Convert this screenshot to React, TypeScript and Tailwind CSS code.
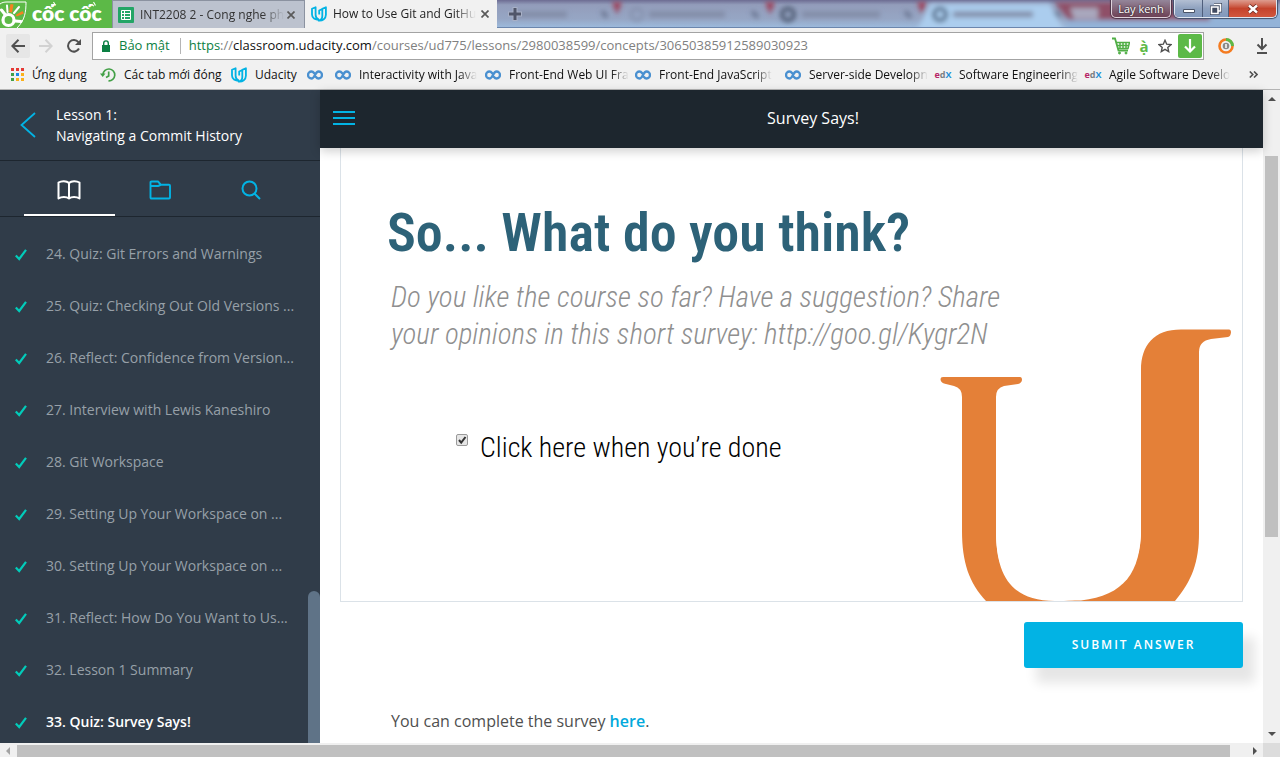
import React from "react";
import type { ReactNode } from "react";

const lessons = [
  "24. Quiz: Git Errors and Warnings",
  "25. Quiz: Checking Out Old Versions ...",
  "26. Reflect: Confidence from Version...",
  "27. Interview with Lewis Kaneshiro",
  "28. Git Workspace",
  "29. Setting Up Your Workspace on ...",
  "30. Setting Up Your Workspace on ...",
  "31. Reflect: How Do You Want to Us...",
  "32. Lesson 1 Summary",
  "33. Quiz: Survey Says!",
];

const UdacityMark = () => (
  <svg viewBox="0 0 16 16" className="size-4 shrink-0" fill="none" stroke="#02b3e4" strokeWidth="1.800" strokeLinejoin="round">
    <path d="M4.600 1.200v7.600c0 2.600 1 3.900 3 4.500C4.200 14.200 1 12 1 8.600V2.800z" />
    <path d="M14.900 1.200v7.600c0 3.800-3.200 6.200-7.300 5.800 2.400-.6 3.700-2.200 3.700-4.700V2.900zM11.300 3 8.200 4.500v3.900" />
  </svg>
);

const CourseraMark = () => (
  <svg viewBox="0 0 16 10" className="h-[10px] w-4 shrink-0" fill="none" stroke="#4a90d0" strokeWidth="2.300" strokeLinecap="round">
    <path d="M7 3C6.300 2 5.400 1.500 4.500 1.500a3.500 3.500 0 0 0 0 7C8 8.500 8 1.500 11.500 1.500a3.500 3.500 0 0 1 0 7C10.500 8.500 9.700 8 9 7" />
  </svg>
);

const EdxMark = () => (
  <span className="flex w-4 shrink-0 items-center justify-center font-['Open_Sans',sans-serif] text-[9px] leading-4 font-bold text-[#7b7f83]" aria-hidden="true">
    <span><span className="text-[#b72667]">e</span>d<span className="text-[#1e8fd5]">X</span></span>
  </span>
);

const AppsMark = () => (
  <svg viewBox="0 0 13 13" className="size-[13px] shrink-0">
    <path fill="#e53935" d="M0 0h3v3H0zM5 0h3v3H5zM10 0h3v3h-3z" />
    <path fill="#43a047" d="M0 5h3v3H0zM0 10h3v3H0z" />
    <path fill="#1e88e5" d="M5 5h3v3H5z" />
    <path fill="#fbb11a" d="M10 5h3v3h-3zM5 10h3v3H5zM10 10h3v3h-3z" />
  </svg>
);

const HistoryMark = () => (
  <svg viewBox="0 0 16 16" className="size-4 shrink-0" fill="none" stroke="#43a047" strokeWidth="1.700">
    <path d="M3 7.500a5.900 5.900 0 1 1 5.500 6.300" />
    <path d="M8.700 4.500V9L6 10.500" />
    <path d="M0 6.500h5.500L2.700 10z" fill="#43a047" stroke="none" />
  </svg>
);

const bookmarks: { mark: ReactNode; text: string; box: string; fade: boolean }[] = [
  { mark: <AppsMark />, text: "Ứng dụng", box: "w-[89px]", fade: false },
  { mark: <HistoryMark />, text: "Các tab mới đóng", box: "w-[131px]", fade: false },
  { mark: <UdacityMark />, text: "Udacity", box: "w-[76px]", fade: false },
  { mark: <CourseraMark />, text: "", box: "w-7", fade: false },
  { mark: <CourseraMark />, text: "Interactivity with Java", box: "w-[150px]", fade: true },
  { mark: <CourseraMark />, text: "Front-End Web UI Fra", box: "w-[150px]", fade: true },
  { mark: <CourseraMark />, text: "Front-End JavaScript", box: "w-[150px]", fade: true },
  { mark: <CourseraMark />, text: "Server-side Developn", box: "w-[150px]", fade: true },
  { mark: <EdxMark />, text: "Software Engineering", box: "w-[150px]", fade: true },
  { mark: <EdxMark />, text: "Agile Software Develo", box: "w-[150px]", fade: true },
];

const TabClose = () => (
  <svg viewBox="0 0 8 8" className="size-2" stroke="#5a5a5a" strokeWidth="1.700">
    <path d="M.5.5l7 7M7.500.5l-7 7" />
  </svg>
);

function TabStrip() {
  return (
    <div className="relative flex h-7 overflow-hidden bg-[#8fa3c4]">
      <div className="flex w-28 shrink-0 items-center bg-[#5cb947]">
        <svg viewBox="0 0 112 28" className="h-7 w-28" aria-hidden="true">
          <path d="M0 4C2 2.500 4 2 7 2h19c0 10-1 18-9 26" fill="none" stroke="#fff" strokeWidth="1" />
          <circle cx="8.500" cy="20" r="5.500" fill="none" stroke="#fff" strokeWidth="3.200" />
          <path d="M1.500 10 5.500 15M15 21l6 .5" stroke="#fff" strokeWidth="3" strokeLinecap="round" />
          <path d="M9 12 10.500 4l3 .5-1.500 8z" fill="#f58220" />
          <path d="M15.500 15 22.500 11l1.300 2.600-7 2.900z" fill="#f58220" />
          <path d="M7.500 12 7 5.500M14 13l5-6" stroke="#fff" strokeWidth="2" strokeLinecap="round" />
          <path d="m51 4.500 3 1.500M53.500 2l2 3.500M91 4.500l3 1.500M93.500 2l2 3.500" stroke="#fff" strokeWidth="1.100" />
          <text x="32" y="21" fill="#fff" fontFamily="Lato, sans-serif" fontWeight="800" fontSize="21">cốc cốc</text>
        </svg>
      </div>
      <div className="flex w-[193px] shrink-0 items-center border-x border-t border-[#8b92a0] bg-[#bcc2ce] pr-[9px] pl-[5px]">
        <svg viewBox="0 0 16 16" className="size-4 shrink-0">
          <rect width="16" height="16" rx="1" fill="#23a566" />
          <path d="M3.500 3.500h9v9h-9zM3.500 6.500h9M3.500 9.500h9M6.500 3.500v9" fill="none" stroke="#fff" />
        </svg>
        <span className="ml-[6px] mask-r-from-85% text-xs whitespace-nowrap text-[#333]">INT2208 2 - Cong nghe ph</span>
        <button aria-label="Close tab" className="ml-auto"><TabClose /></button>
      </div>
      <div className="flex w-[192px] shrink-0 items-center bg-[#f1f1f1] pr-[8px] pl-[6px]">
        <UdacityMark />
        <span className="ml-[6px] mask-r-from-85% text-xs whitespace-nowrap text-[#222]">How to Use Git and GitHu</span>
        <button aria-label="Close tab" className="ml-auto"><TabClose /></button>
      </div>
      <div className="relative flex min-w-0 flex-1 justify-end border-b border-[#6b86ad]">
        <svg viewBox="0 0 783 28" preserveAspectRatio="none" className="absolute inset-0 size-full" aria-hidden="true">
          <defs>
            <linearGradient id="glass" x1="0" y1="0" x2="0" y2="1">
              <stop offset="0" stopColor="#6d6c92" />
              <stop offset=".18" stopColor="#939dbb" />
              <stop offset=".7" stopColor="#96a6c4" />
              <stop offset="1" stopColor="#9cb9db" />
            </linearGradient>
            <filter id="soft" x="-5%" y="-50%" width="110%" height="200%"><feGaussianBlur stdDeviation="2.500" /></filter>
          </defs>
          <rect width="783" height="28" fill="url(#glass)" />
          <g filter="url(#soft)">
            <path d="M420 32 433 4h120l14 28z" fill="#abcdee" />
            <path d="M570 34h218V8H570z" fill="#93b3d8" />
            <path d="M557 2h66l90 0v19H572z" fill="#8f5068" />
            <path d="M573 8h28v12h-24z" fill="#a9a7bd" />
            <path d="m115 2 10 0-5 13zM268 2h10l-5 13zM420 2h10l-5 13z" fill="#9c4058" />
            <path d="M18 15h52M152 15h76M305 15h78M456 15h80" stroke="#818ba6" strokeWidth="6" />
            <circle cx="291" cy="15" r="6" fill="none" stroke="#4c5870" strokeWidth="4" />
            <circle cx="443" cy="15" r="6" fill="none" stroke="#4c6480" strokeWidth="4" />
            <circle cx="140" cy="15" r="6" fill="none" stroke="#7e89a4" strokeWidth="2" />
            <path d="M105 12l5 6M255 12l6 6M408 12l6 6M558 12l5 6" stroke="#66718c" strokeWidth="4" />
          </g>
        </svg>
        <button aria-label="New tab" className="relative mt-[7px] mr-auto ml-[11px] size-[14px] self-start">
          <svg viewBox="0 0 14 14" className="block size-[14px]">
            <path d="M4.500 0h5v4.500H14v5H9.500V14h-5V9.500H0v-5h4.500z" fill="#a8b0c6" />
            <path d="M5.500 1h3v4.500H13v3H8.500V13h-3V8.500H1v-3h4.500z" fill="#50566a" />
          </svg>
        </button>
        <button className="relative mr-[3px] h-[18px] w-[60px] rounded-b-[5px] border border-t-0 border-[#e0d3dc] bg-linear-to-b from-[#94869a] to-[#6d4256] text-[11px] leading-4 text-white shadow-[0_0_1px_1px_#4a3547] text-shadow-[0_0_2px_#000]">Lay kenh</button>
        <div className="relative mr-[3px] flex h-[18px] w-[103px] overflow-hidden rounded-b-[5px] border border-t-0 border-[#dfe6f0] shadow-[0_0_1px_1px_#40506c]">
          <button aria-label="Minimize" className="flex w-7 items-center justify-center border-r border-[#4f5f7c] bg-linear-to-b from-[#b3bfd3] via-[#8fa2bf] via-50% to-[#8199bd]">
            <svg viewBox="0 0 12 4" className="mt-1 h-1 w-3"><path d="M.5.5h11v3H.5z" fill="#fff" stroke="#4a5468" /></svg>
          </button>
          <button aria-label="Restore" className="flex w-[26px] items-center justify-center border-r border-[#4f5f7c] bg-linear-to-b from-[#b3bfd3] via-[#8fa2bf] via-50% to-[#8199bd]">
            <svg viewBox="0 0 12 12" className="size-3" fill="none"><path d="M4 1.500h6.500V8H8M1.500 4H8v6.500H1.500zM4 6.500h1.500V8H4z" stroke="#414b60" strokeWidth="3" /><path d="M4 1.500h6.500V8H8M1.500 4H8v6.500H1.500z" stroke="#fff" strokeWidth="1.600" /></svg>
          </button>
          <button aria-label="Close" className="flex flex-1 items-center justify-center bg-linear-to-b from-[#dd9c8f] via-[#c4432c] via-50% to-[#d2573d]">
            <svg viewBox="0 0 12 10" className="h-[10px] w-3"><path d="m2 1.500 8 7m0-7-8 7" stroke="#6b2a22" strokeWidth="4" /><path d="m2 1.500 8 7m0-7-8 7" stroke="#fff" strokeWidth="2.400" /></svg>
          </button>
        </div>
      </div>
    </div>
  );
}

function Toolbar() {
  return (
    <div className="flex h-8 items-end bg-[#f1f1f1]">
      <div className="mb-[2px] flex w-[92px] shrink-0 gap-1 pl-[6px]">
        <button aria-label="Back" className="flex size-6 items-center justify-center rounded-xs bg-[#e6e6e6]">
          <svg viewBox="0 0 14 14" className="size-[14px]" fill="none" stroke="#505050" strokeWidth="2"><path d="M14 7H1.500M7.500.8 1.300 7l6.200 6.200" /></svg>
        </button>
        <button aria-label="Forward" className="flex size-6 items-center justify-center">
          <svg viewBox="0 0 14 14" className="size-[14px]" fill="none" stroke="#d2d2d2" strokeWidth="2"><path d="M0 7h12.500M6.500.8 12.700 7l-6.200 6.200" /></svg>
        </button>
        <button aria-label="Reload" className="flex size-6 items-center justify-center">
          <svg viewBox="0 0 14 14" className="size-[14px]"><path d="M12 9.500A5.800 5.800 0 1 1 11.400 3.200" fill="none" stroke="#505050" strokeWidth="2" /><path d="M14 0v6H8z" fill="#505050" /></svg>
        </button>
      </div>
      <div className="flex h-7 min-w-0 flex-1 items-center border border-[#a3a3a3] bg-white pr-px pl-[9px]">
        <svg viewBox="0 0 8 12" className="h-3 w-2 shrink-0"><path d="M0 5h8v7H0z" fill="#0b8043" /><path d="M1.700 5.500V3.200a2.300 2.300 0 0 1 4.600 0v2.300" fill="none" stroke="#0b8043" strokeWidth="1.400" /></svg>
        <span className="ml-[9px] text-[13px] text-[#0b8043]">Bảo mật</span>
        <span className="mr-2 ml-[10px] h-4 w-px bg-[#b5b5b5]" />
        <span className="min-w-0 flex-1 truncate text-[13px] text-[#808080]"><span className="text-[#0b8043]">https</span>://<span className="text-[#111]">classroom.udacity.com</span>/courses/ud775/lessons/2980038599/concepts/30650385912589030923</span>
        <button aria-label="Shopping">
          <svg viewBox="0 0 18 18" className="size-[18px]" fill="none" stroke="#4fae45"><path d="M0 1.500h3l3.500 12H16" strokeWidth="1.800" /><path d="M4 5.500h13.500L16 11.500H6M5 8.500h12M8 5v6.500M11 5v6.500M14 5v6.500" strokeWidth="1.500" /><circle cx="7.500" cy="16" r="1" fill="#4fae45" /><circle cx="14" cy="16" r="1" fill="#4fae45" /></svg>
        </button>
        <button aria-label="Vietnamese typing" className="ml-[9px] w-[10px] text-[15px] leading-5 font-bold text-[#5cb947]">ạ̀</button>
        <button aria-label="Bookmark this page" className="ml-[9px]">
          <svg viewBox="0 0 14 14" className="size-[14px]" fill="none" stroke="#505050" strokeWidth="1.400"><path d="m7 1.300 1.700 3.900 4.300.4-3.200 2.800.9 4.200L7 10.400l-3.700 2.200.9-4.200L1 5.600l4.300-.4z" /></svg>
        </button>
        <button aria-label="Download media" className="ml-[6px] flex size-6 items-center justify-center rounded-[2px] bg-[#5cb947]">
          <svg viewBox="0 0 12 14" className="h-[14px] w-3" fill="none" stroke="#fff" strokeWidth="2.200"><path d="M6 0v12M1 7.500l5 5 5-5" /></svg>
        </button>
      </div>
      <div className="flex h-7 w-[76px] shrink-0 items-center justify-between pr-3 pl-[14px]">
        <button aria-label="Extension">
          <svg viewBox="0 0 16 16" className="size-4" fill="none"><circle cx="8" cy="8" r="6.500" stroke="#f47b20" strokeWidth="2.600" /><path d="M8 1.500A6.500 6.500 0 0 1 14.500 8" stroke="#5cb947" strokeWidth="3" /><circle cx="8" cy="8" r="3.300" fill="#8a8a8a" /><path d="M8 6v4" stroke="#fff" strokeWidth="1.500" /></svg>
        </button>
        <button aria-label="Downloads">
          <svg viewBox="0 0 12 16" className="h-4 w-3" fill="none" stroke="#505050" strokeWidth="2"><path d="M6 0v10M1.500 6.500 6 11l4.500-4.500M1 15h10" /></svg>
        </button>
      </div>
    </div>
  );
}

function BookmarksBar() {
  return (
    <nav aria-label="Bookmarks" className="flex h-[30px] items-center overflow-hidden border-b border-[#b4b4b4] bg-[#f1f1f1] pl-[11px]">
      {bookmarks.map((b, i) => (
        <a key={i} href="#" aria-label={b.text || "Coursera"} className={`flex shrink-0 items-center text-xs text-[#111] ${b.box}`}>
          {b.mark}
          {b.text && <span className={`ml-2 whitespace-nowrap ${b.fade ? "mask-r-from-85%" : ""}`}>{b.text}</span>}
        </a>
      ))}
      <button aria-label="More bookmarks" className="mr-[22px] ml-auto">
        <svg viewBox="0 0 9 7" className="h-[7px] w-[9px]" fill="none" stroke="#505050" strokeWidth="1.600"><path d="M.8.5l3 3-3 3M5 .5l3 3-3 3" /></svg>
      </button>
    </nav>
  );
}

function Sidebar() {
  return (
    <aside className="flex w-80 shrink-0 flex-col overflow-hidden bg-[#303c49]">
      <div className="flex h-[71px] shrink-0 items-center border-b border-[#1d262f] pl-5">
        <button aria-label="Back to lessons">
          <svg viewBox="0 0 16 26" className="h-[26px] w-4" fill="none" stroke="#02b3e4" strokeWidth="1.800"><path d="M15 1 1.500 13 15 25" /></svg>
        </button>
        <p className="ml-5 text-sm leading-[21px] text-white">Lesson 1:<br />Navigating a Commit History</p>
      </div>
      <div className="flex h-14 shrink-0 border-b border-[#1d262f] px-6">
        <button aria-label="Lesson contents" className="flex flex-1 items-center justify-center border-b-2 border-white pt-1">
          <svg viewBox="0 0 24 20" className="h-5 w-6" fill="none" stroke="#fff" strokeWidth="2" strokeLinejoin="round"><path d="M12 3C9.500.6 4.500.6 1.500 2.500v16C4.500 16.500 9.500 16.500 12 18.500c2.500-2 7.500-2 10.500 0v-16C19.500.6 14.500.6 12 3zM12 3v15" /></svg>
        </button>
        <button aria-label="Resources" className="flex flex-1 items-center justify-center pt-[2px]">
          <svg viewBox="0 0 22 20" className="h-5 w-[22px]" fill="none" stroke="#02b3e4" strokeWidth="1.900" strokeLinejoin="round"><path d="M1.500 6V2.500Q1.500 1.500 2.500 1.500H9l3 3.300h8q1 0 1 1V17.500q0 1-1 1H2.500q-1 0-1-1V6H9l3-1.200" /></svg>
        </button>
        <button aria-label="Search" className="flex flex-1 items-center justify-center pt-[2px]">
          <svg viewBox="0 0 20 20" className="size-5" fill="none" stroke="#02b3e4" strokeWidth="2"><circle cx="8.500" cy="8.500" r="7" /><path d="m13.500 13.500 5.500 5.500" /></svg>
        </button>
      </div>
      <div className="flex min-h-0 flex-1">
        <ol className="min-w-0 flex-1 overflow-hidden pt-[11px]">
          {lessons.map((l, i) => (
            <li key={l}>
              <a href="#" className={`flex h-[52px] items-center pl-[15px] text-sm whitespace-nowrap ${i === lessons.length - 1 ? "font-semibold text-white" : "text-[#97a0a8]"}`}>
                <svg viewBox="0 0 12 12" className="mt-[2px] h-3 w-3 shrink-0" fill="none" stroke="#02ccba" strokeWidth="2.200"><path d="M.8 6.500 4.200 10 11 .8" /></svg>
                <span className="ml-[19px]">{l}</span>
              </a>
            </li>
          ))}
        </ol>
        <div className="flex w-3 flex-col justify-end"><div className="h-[152px] rounded-t-full bg-[#5f7387]" /></div>
      </div>
    </aside>
  );
}

function Lesson() {
  return (
    <main className="flex min-w-0 flex-1 flex-col bg-white">
      <header className="z-10 flex h-[58px] shrink-0 items-center bg-[#1d262e] pb-[2px] pl-[13px] shadow-[0_3px_10px_rgba(0,0,0,0.2)]">
        <button aria-label="Toggle menu">
          <svg viewBox="0 0 22 16" className="h-4 w-[22px]" stroke="#02b3e4" strokeWidth="2"><path d="M0 2h22M0 8h22M0 14h22" /></svg>
        </button>
        <h1 className="min-w-0 flex-1 pl-2 text-center text-base text-white">Survey Says!</h1>
      </header>
      <div className="min-h-0 flex-1 overflow-hidden px-5">
        <section className="relative h-[454px] border border-t-0 border-[#dbe2e8] pt-[53px] pl-[46px] font-['Roboto_Condensed','Open_Sans_Condensed',sans-serif]">
          <svg viewBox="0 0 291 272" className="absolute right-[11px] bottom-0 h-[272px] w-[291px]" aria-hidden="true">
            <path fill="#e48038" d="M3 48H80q2 0 2 3-.5 3-4 4l-14 2q-8 2-8 11V202c0 43 14 70 59 70 50 0 87-18 86-73V41C201 16 214 .5 241 .5h48q2 0 2 3-.5 4-3 4.500L271 10q-12 2-12 13V204c0 29-7 48-24 68H46C29 254 22 233 22 202V68q0-9-8-11L4 54.500Q.5 53 .5 50q0-2 2.500-2z" />
            <path fill="#fff" d="M56 202c0 44 16 65 59 69.500h26c43-5 60-28 60-72V150H56z" />
          </svg>
          <h2 className="text-[54px] leading-16 font-semibold text-[#2d6278]">So... What do you think?</h2>
          <p className="mt-[14px] pl-1 text-[29px] leading-[37px] font-light text-[#8f8f8f] italic">Do you like the course so far? Have a suggestion? Share<br />your opinions in this short survey: http://goo.gl/Kygr2N</p>
          <label className="mt-[77px] ml-[69px] flex w-fit items-start text-[28px] leading-9 font-light text-black">
            <span className="grid">
              <input type="checkbox" defaultChecked className="peer col-start-1 row-start-1 mt-1 h-3 w-3 appearance-none rounded-[2px] border border-[#9a9a9a] bg-[#e6e6e6]" />
              <svg viewBox="0 0 12 12" className="pointer-events-none col-start-1 row-start-1 mt-1 hidden size-3 peer-checked:block" fill="none" stroke="#333" strokeWidth="2"><path d="m3 6 2.200 2.600L9.500 3" /></svg>
            </span>
            <span className="ml-3">Click here when you’re done</span>
          </label>
        </section>
        <div className="mt-5 flex justify-end">
          <button className="h-[46px] w-[219px] rounded-[3px] bg-[#02b3e4] text-xs font-semibold tracking-[2px] text-white shadow-[12px_15px_12px_rgba(0,0,0,0.1)]">SUBMIT ANSWER</button>
        </div>
        <p className="mt-[41px] pl-[51px] text-base leading-6 text-[#4f4f4f]">You can complete the survey <a href="#" className="font-semibold text-[#02a9dc]">here</a>.</p>
      </div>
    </main>
  );
}

export default function App() {
  return (
    <div className="flex h-screen flex-col overflow-hidden bg-white font-['Open_Sans',sans-serif]">
      <TabStrip />
      <Toolbar />
      <BookmarksBar />
      <div className="flex min-h-0 flex-1">
        <Sidebar />
        <Lesson />
        <div className="flex w-[17px] shrink-0 flex-col items-center bg-[#f0f0f0]">
          <svg viewBox="0 0 8 4" className="mt-[7px] h-1 w-2 shrink-0" fill="#505050"><path d="M0 4 4 0l4 4z" /></svg>
          <div className="mt-[55px] h-[381px] w-[13px] bg-[#c0c0c0]" />
          <svg viewBox="0 0 8 4" className="mt-auto mb-[7px] h-1 w-2 shrink-0" fill="#505050"><path d="m0 0 4 4 4-4z" /></svg>
        </div>
      </div>
      <div className="flex h-[14px] shrink-0 items-center bg-[#f0f0f0]">
        <svg viewBox="0 0 4 8" className="mx-[6px] mt-[2px] h-2 w-1 shrink-0" fill="#a3a3a3"><path d="M4 0 0 4l4 4z" /></svg>
        <div className="ml-px h-3 flex-1 self-end bg-[#c0c0c0]" />
        <svg viewBox="0 0 4 8" className="mr-[6px] ml-[23px] mt-[2px] h-2 w-1 shrink-0" fill="#505050"><path d="m0 0 4 4-4 4z" /></svg>
        <div className="h-full w-[17px] bg-[#dcdcdc]" />
      </div>
    </div>
  );
}
